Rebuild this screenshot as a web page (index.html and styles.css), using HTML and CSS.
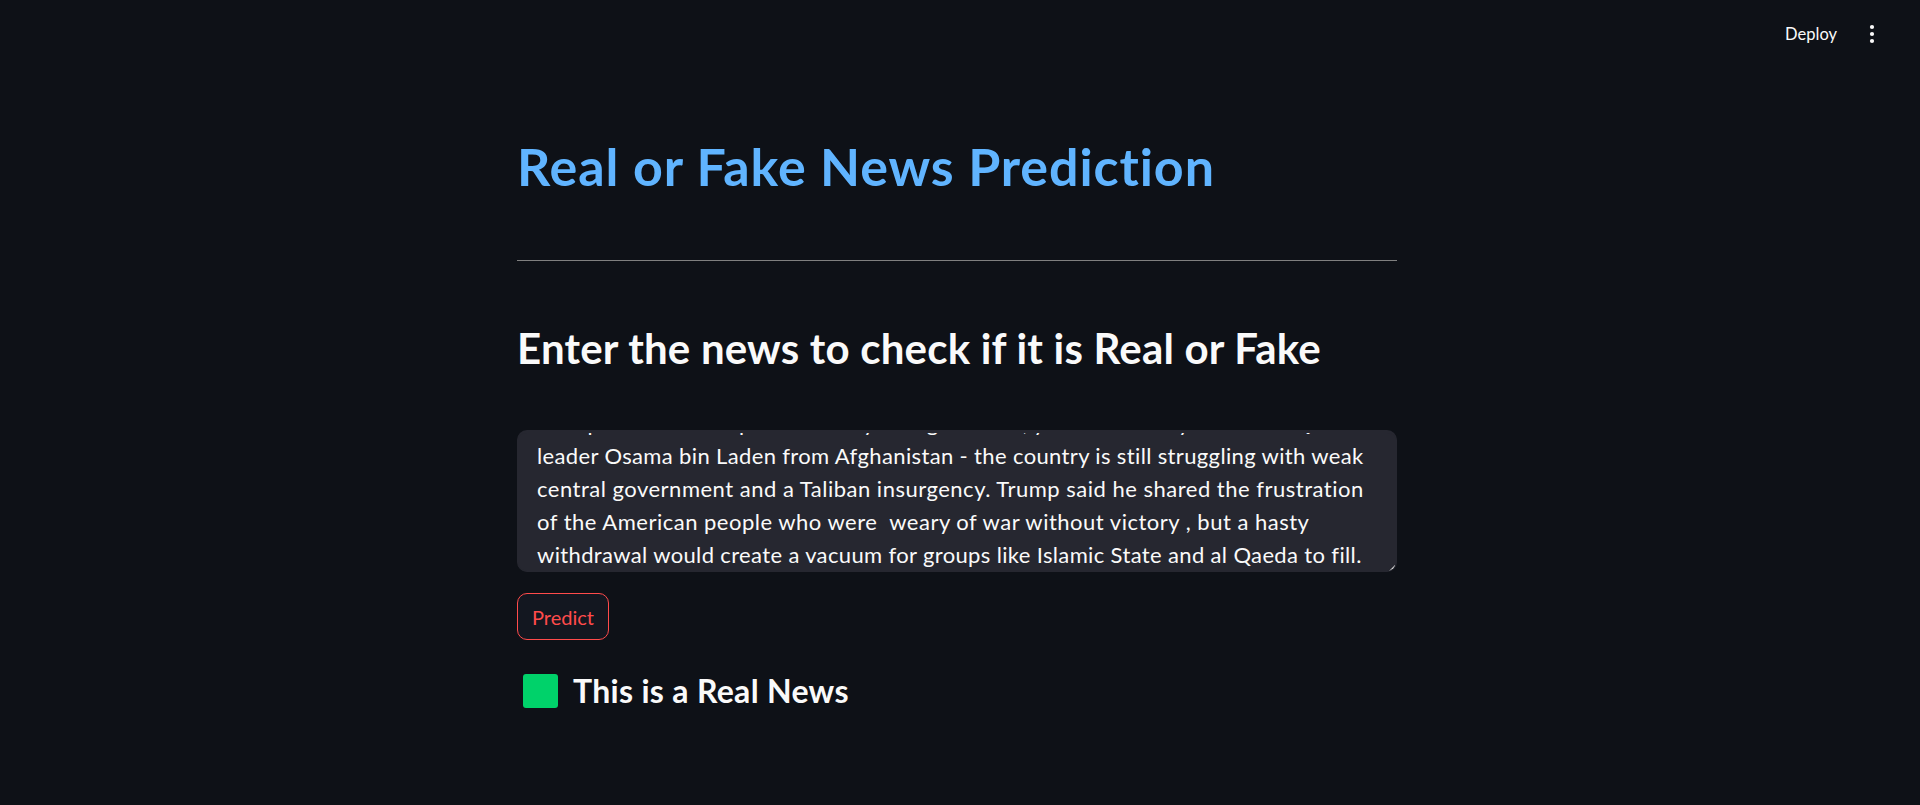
FILE: index.html
```html
<!DOCTYPE html>
<html lang="en">
<head>
<meta charset="utf-8">
<title>Real or Fake News Prediction</title>
<link rel="stylesheet" href="styles.css">
</head>
<body>
<header class="topbar">
  <button class="deploy">Deploy</button>
  <button class="menu" aria-label="Main menu">
    <svg width="6" height="20" viewBox="0 0 6 20"><circle cx="3" cy="3" r="2.1" fill="#fafafa"/><circle cx="3" cy="10" r="2.1" fill="#fafafa"/><circle cx="3" cy="17" r="2.1" fill="#fafafa"/></svg>
  </button>
</header>
<main class="main">
  <h1 class="title">Real or Fake News Prediction</h1>
  <hr class="divider">
  <h2 class="subtitle">Enter the news to check if it is Real or Fake</h2>
  <div class="textarea">
    <div class="lines">
      <div class="line">Trump said U.S. troops would stay in Afghanistan, years after they ousted al Qaeda</div>
      <div class="line">leader Osama bin Laden from Afghanistan - the country is still struggling with weak</div>
      <div class="line line-wide">central government and a Taliban insurgency. Trump said he shared the frustration</div>
      <div class="line line-wide">of the American people who were &nbsp;weary of war without victory , but a hasty</div>
      <div class="line">withdrawal would create a vacuum for groups like Islamic State and al Qaeda to fill.</div>
    </div>
    <span class="grip"></span>
  </div>
  <button class="predict">Predict</button>
  <h3 class="result"><span class="square"></span><span class="result-text">This is a Real News</span></h3>
</main>
</body>
</html>
```

FILE: styles.css
```css
html, body {
  margin: 0;
  padding: 0;
  background: #0e1117;
  height: 100%;
  overflow: hidden;
}
body {
  font-family: "Lato", "Noto Sans", sans-serif;
  color: #fafafa;
}
.topbar {
  height: 68px;
  display: flex;
  justify-content: flex-end;
  align-items: center;
  padding-right: 28px;
  gap: 5px;
}
.deploy {
  background: transparent;
  border: none;
  color: #fafafa;
  font-family: inherit;
  font-size: 16.5px;
  padding: 0 10px;
  height: 40px;
  cursor: pointer;
}
.menu {
  width: 40px;
  height: 40px;
  background: transparent;
  border: none;
  display: flex;
  align-items: center;
  justify-content: center;
  padding: 0;
}
.main {
  width: 880px;
  margin: 0 calc(50% - 437px) 0 calc(50% - 443px);
  display: flex;
  flex-direction: column;
  align-items: flex-start;
}
.title {
  margin: 66px 0 0;
  font-size: 52px;
  line-height: 64px;
  letter-spacing: 0.9px;
  font-weight: 700;
  color: #60b4ff;
}
.divider {
  align-self: stretch;
  margin: 62px 0 0;
  border: none;
  border-top: 1px solid #808080;
  height: 0;
}
.subtitle {
  margin: 61px 0 0;
  font-size: 42px;
  line-height: 52px;
  letter-spacing: 0.2px;
  font-weight: 700;
  color: #fafafa;
}
.textarea {
  align-self: stretch;
  box-sizing: border-box;
  margin-top: 56px;
  height: 142px;
  background: #262730;
  border-style: solid;
  border-color: #262730;
  border-width: 3px 1px 1px 1px;
  border-radius: 10px;
  position: relative;
  overflow: hidden;
  display: flex;
  flex-direction: column;
  justify-content: flex-end;
}
.lines {
  padding: 0 19px;
}
.line {
  font-size: 22px;
  line-height: 33px;
  letter-spacing: 0.36px;
  white-space: pre;
  color: #fafafa;
}
.line-wide {
  letter-spacing: 0.5px;
}
.grip {
  position: absolute;
  right: 1px;
  bottom: 0;
  width: 0;
  height: 0;
  border-left: 6px solid transparent;
  border-bottom: 6px solid #d8d8d8;
}
.predict {
  margin-top: 21px;
  height: 47px;
  padding: 0 14px;
  background: #131720;
  border: 1px solid #ff4b4b;
  border-radius: 10px;
  color: #ff4b4b;
  font-family: inherit;
  font-size: 20px;
  cursor: pointer;
}
.result {
  margin: 27px 0 0;
  display: flex;
  align-items: center;
  height: 48px;
  font-weight: 700;
}
.square {
  width: 35px;
  height: 34px;
  margin-left: 6px;
  background: #00d26a;
  border-radius: 3px;
}
.result-text {
  margin-left: 15px;
  font-size: 32px;
  line-height: 48px;
  letter-spacing: 0.3px;
  color: #fafafa;
}
```
